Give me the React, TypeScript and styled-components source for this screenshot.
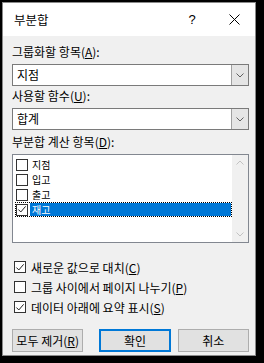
import React, { useState } from "react";
import styled, { createGlobalStyle } from "styled-components";

const GlobalStyle = createGlobalStyle`
  html, body {
    margin: 0;
    padding: 0;
    background: #000;
  }
  body {
    font-family: "Noto Sans CJK KR", "Noto Sans", sans-serif;
    font-size: 12px;
    color: #000;
  }
`;

const Dialog = styled.div`
  box-sizing: border-box;
  margin: 2px 0 0 2px;
  width: 254px;
  height: 354px;
  border: 1px solid #8a8a8a;
  background: #f0f0f0;
  display: flex;
  flex-direction: column;
`;

const TitleBar = styled.div`
  height: 33px;
  background: #fff;
  display: flex;
  align-items: center;
  padding-left: 11px;
  font-size: 12.5px;
`;

const Title = styled.span`
  flex: 1;
`;

const TitleButton = styled.div`
  width: 42px;
  height: 33px;
  display: flex;
  align-items: center;
  justify-content: center;
  font-family: "Liberation Sans", sans-serif;
  font-size: 13px;
`;

const Body = styled.div`
  flex: 1;
  display: flex;
  flex-direction: column;
  padding: 0 6px 0 9px;
`;

const Label = styled.div<{ $top: number }>`
  margin-top: ${({ $top }) => $top}px;
  height: 16px;
  line-height: 16px;
  margin-bottom: 4px;
  white-space: nowrap;
`;

const Key = styled.span`
  text-decoration: underline;
`;

const Combo = styled.div`
  box-sizing: border-box;
  height: 22px;
  border: 1px solid #7a7a7a;
  background: #fff;
  display: flex;
  align-items: stretch;
`;

const ComboText = styled.div`
  flex: 1;
  padding-left: 4px;
  line-height: 20px;
`;

const ComboArrow = styled.div`
  width: 16px;
  background: #e5e5e5;
  border-left: 1px solid #a0a0a0;
  display: flex;
  align-items: center;
  justify-content: center;
`;

const ListBox = styled.div`
  box-sizing: border-box;
  height: 89px;
  border: 1px solid #828790;
  background: #fff;
  display: flex;
`;

const ListItems = styled.div`
  flex: 1;
  padding: 2px 0 0 2px;
`;

const ListRow = styled.div<{ $focus?: boolean }>`
  box-sizing: border-box;
  height: 15px;
  display: flex;
  align-items: center;
  border: 1px dotted ${({ $focus }) => ($focus ? "#000" : "transparent")};
`;

const ItemText = styled.div<{ $selected?: boolean }>`
  flex: 1;
  height: 13px;
  line-height: 13px;
  font-size: 10px;
  padding-left: 2px;
  margin-left: 2px;
  background: ${({ $selected }) => ($selected ? "#0078d7" : "transparent")};
  color: ${({ $selected }) => ($selected ? "#fff" : "#000")};
`;

const ScrollBar = styled.div`
  width: 16px;
  background: #f0f0f0;
  display: flex;
  flex-direction: column;
  justify-content: space-between;
  align-items: center;
  padding: 5px 0;
`;

const Box = styled.div<{ $size: number }>`
  box-sizing: border-box;
  width: ${({ $size }) => $size}px;
  height: ${({ $size }) => $size}px;
  border: 1px solid #333;
  background: #fff;
  display: flex;
  align-items: center;
  justify-content: center;
  flex-shrink: 0;
`;

const Options = styled.div`
  margin-top: 14px;
  display: flex;
  flex-direction: column;
  padding-left: 2px;
`;

const OptionRow = styled.div`
  height: 20px;
  display: flex;
  align-items: center;
  gap: 5px;
  white-space: nowrap;
`;

const ButtonRow = styled.div`
  margin-top: 12px;
  display: flex;
  gap: 7px;
`;

const Button = styled.div<{ $default?: boolean }>`
  box-sizing: border-box;
  width: 72px;
  height: 23px;
  background: #e1e1e1;
  border: ${({ $default }) => ($default ? "2px solid #0078d7" : "1px solid #adadad")};
  display: flex;
  align-items: center;
  justify-content: center;
  &:first-child {
    margin-right: 9px;
  }
`;

const Check = () => (
  <svg width="11" height="11" viewBox="0 0 11 11">
    <path d="M1.5 5.5 L4.2 8.2 L9.5 2" fill="none" stroke="#222" strokeWidth="1.1" />
  </svg>
);

const Chevron = ({ up, color }: { up?: boolean; color: string }) => (
  <svg width="8" height="5" viewBox="0 0 8 5">
    <path d={up ? "M0.5 4.5 L4 1 L7.5 4.5" : "M0.5 0.5 L4 4 L7.5 0.5"} fill="none" stroke={color} strokeWidth="1" />
  </svg>
);

const items = [
  { name: "지점", checked: false },
  { name: "입고", checked: false },
  { name: "출고", checked: false },
  { name: "재고", checked: true },
];

export default function App() {
  const [selected] = useState(3);
  return (
    <>
      <GlobalStyle />
      <Dialog>
        <TitleBar>
          <Title>부분합</Title>
          <TitleButton>?</TitleButton>
          <TitleButton>
            <svg width="11" height="11" viewBox="0 0 11 11">
              <path d="M0.5 0.5 L10.5 10.5 M10.5 0.5 L0.5 10.5" stroke="#000" strokeWidth="1" />
            </svg>
          </TitleButton>
        </TitleBar>
        <Body>
          <Label $top={8}>
            그룹화할 항목(<Key>A</Key>):
          </Label>
          <Combo>
            <ComboText>지점</ComboText>
            <ComboArrow>
              <Chevron color="#606060" />
            </ComboArrow>
          </Combo>
          <Label $top={2}>
            사용할 함수(<Key>U</Key>):
          </Label>
          <Combo>
            <ComboText>합계</ComboText>
            <ComboArrow>
              <Chevron color="#606060" />
            </ComboArrow>
          </Combo>
          <Label $top={4}>
            부분합 계산 항목(<Key>D</Key>):
          </Label>
          <ListBox>
            <ListItems>
              {items.map((it, i) => (
                <ListRow key={it.name} $focus={i === selected}>
                  <Box $size={12}>{it.checked && <Check />}</Box>
                  <ItemText $selected={i === selected}>{it.name}</ItemText>
                </ListRow>
              ))}
            </ListItems>
            <ScrollBar>
              <Chevron up color="#c2c2c2" />
              <Chevron color="#c2c2c2" />
            </ScrollBar>
          </ListBox>
          <Options>
            <OptionRow>
              <Box $size={12}>
                <Check />
              </Box>
              <span>
                새로운 값으로 대치(<Key>C</Key>)
              </span>
            </OptionRow>
            <OptionRow>
              <Box $size={12} />
              <span>
                그룹 사이에서 페이지 나누기(<Key>P</Key>)
              </span>
            </OptionRow>
            <OptionRow>
              <Box $size={12}>
                <Check />
              </Box>
              <span>
                데이터 아래에 요약 표시(<Key>S</Key>)
              </span>
            </OptionRow>
          </Options>
          <ButtonRow>
            <Button>
              모두 제거(<Key>R</Key>)
            </Button>
            <Button $default>확인</Button>
            <Button>취소</Button>
          </ButtonRow>
        </Body>
      </Dialog>
    </>
  );
}
